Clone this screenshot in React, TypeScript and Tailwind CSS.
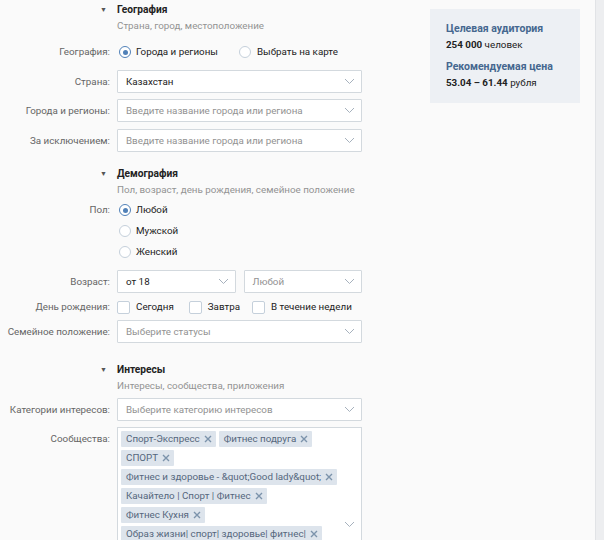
import React from "react";

const font = { fontFamily: "Roboto, 'Open Sans', Arial, sans-serif" };

function Chevron() {
  return (
    <svg width="11" height="7" viewBox="0 0 11 7" className="shrink-0">
      <path d="M1 1l4.5 4.5L10 1" fill="none" stroke="#a6b1bd" strokeWidth="1" />
    </svg>
  );
}

function Radio({ checked, className = "" }: { checked?: boolean; className?: string }) {
  return (
    <span
      className={
        "w-[12px] h-[12px] rounded-full border flex items-center justify-center shrink-0 bg-white " +
        (checked ? "border-[#5181b8] " : "border-[#c5d0db] ") +
        className
      }
    >
      {checked && <span className="w-[5px] h-[5px] rounded-full bg-[#5181b8]" />}
    </span>
  );
}

function Check({ className = "" }: { className?: string }) {
  return <span className={"block w-[13px] h-[13px] rounded-[2px] border border-[#c5d0db] bg-white shrink-0 " + className} />;
}

function Select({ text, placeholder, className = "" }: { text: string; placeholder?: boolean; className?: string }) {
  return (
    <div
      className={
        "h-[23px] border border-[#d3d9de] bg-white rounded-[1px] flex items-center justify-between pl-[8px] pr-[6px] " +
        className
      }
    >
      <span className={placeholder ? "text-[#929292]" : "text-[#222]"}>{text}</span>
      <Chevron />
    </div>
  );
}

function Row({ label, children, className = "" }: { label: string; children: React.ReactNode; className?: string }) {
  return (
    <div className={"flex items-center " + className}>
      <div className="w-[117px] shrink-0 text-right pr-[7px] text-[#656565] whitespace-nowrap">{label}</div>
      <div className="flex-1 min-w-0">{children}</div>
    </div>
  );
}

function Heading({ title, sub, className = "" }: { title: string; sub: string; className?: string }) {
  return (
    <div className={className}>
      <div className="flex items-center h-[14px]">
        <div className="w-[117px] shrink-0 flex justify-end pr-[10px]">
          <span className="text-[7px] text-[#555] leading-none">▼</span>
        </div>
        <span className="font-bold text-[#222] text-[10.2px]">{title}</span>
      </div>
      <div className="flex items-center h-[14px] mt-[2px]">
        <div className="w-[117px] shrink-0" />
        <span className="text-[#939393]">{sub}</span>
      </div>
    </div>
  );
}

function Tag({ text }: { text: string }) {
  return (
    <span className="h-[16px] bg-[#dde4ec] text-[#55677d] pl-[5px] pr-[4px] flex items-center gap-[4px] rounded-[1px] whitespace-nowrap">
      {text}
      <svg width="8" height="8" viewBox="0 0 8 8">
        <path d="M1 1l6 6M7 1L1 7" stroke="#7c93ab" strokeWidth="1.4" />
      </svg>
    </span>
  );
}

const tags = [
  "Спорт-Экспресс",
  "Фитнес подруга",
  "СПОРТ",
  "Фитнес и здоровье - &quot;Good lady&quot;",
  "Качайтело | Спорт | Фитнес",
  "Фитнес Кухня",
  "Образ жизни| спорт| здоровье| фитнес|",
  "Здоровый образ жизни | Спорт | Фитнес",
  "Фитнес дома",
  "Спорт для всех",
  "Тренировки для девушек | Фитнес",
  "Правильное питание | Здоровье | Спорт",
];

export default function App() {
  return (
    <div className="w-[604px] h-[540px] overflow-hidden bg-[#fafafa] flex text-[9.8px] leading-[14px]" style={font}>
      <div className="w-[362px] shrink-0 pt-[3px]">
        <Heading title="География" sub="Страна, город, местоположение" />
        <Row label="География:" className="h-[18px] mt-[10px]">
          <div className="flex items-center">
            <Radio checked className="ml-[2px]" />
            <span className="ml-[5px] text-[#222]">Города и регионы</span>
            <Radio className="ml-[21px]" />
            <span className="ml-[6px] text-[#222]">Выбрать на карте</span>
          </div>
        </Row>
        <Row label="Страна:" className="mt-[9px]">
          <Select text="Казахстан" />
        </Row>
        <Row label="Города и регионы:" className="mt-[6px]">
          <Select text="Введите название города или региона" placeholder />
        </Row>
        <Row label="За исключением:" className="mt-[7px]">
          <Select text="Введите название города или региона" placeholder />
        </Row>

        <Heading title="Демография" sub="Пол, возраст, день рождения, семейное положение" className="mt-[15px]" />
        <Row label="Пол:" className="h-[18px] mt-[4px]">
          <div className="flex items-center">
            <Radio checked className="ml-[2px]" />
            <span className="ml-[5px] text-[#222]">Любой</span>
          </div>
        </Row>
        <Row label="" className="h-[18px] mt-[3px]">
          <div className="flex items-center">
            <Radio className="ml-[2px]" />
            <span className="ml-[5px] text-[#222]">Мужской</span>
          </div>
        </Row>
        <Row label="" className="h-[18px] mt-[3px]">
          <div className="flex items-center">
            <Radio className="ml-[2px]" />
            <span className="ml-[5px] text-[#222]">Женский</span>
          </div>
        </Row>
        <Row label="Возраст:" className="mt-[9px]">
          <div className="flex gap-[8px]">
            <Select text="от 18" className="flex-1" />
            <Select text="Любой" placeholder className="flex-1" />
          </div>
        </Row>
        <Row label="День рождения:" className="h-[18px] mt-[5px]">
          <div className="flex items-center">
            <Check />
            <span className="ml-[6px] text-[#222]">Сегодня</span>
            <Check className="ml-[15px]" />
            <span className="ml-[6px] text-[#222]">Завтра</span>
            <Check className="ml-[12px]" />
            <span className="ml-[6px] text-[#222]">В течение недели</span>
          </div>
        </Row>
        <Row label="Семейное положение:" className="mt-[4px]">
          <Select text="Выберите статусы" placeholder />
        </Row>

        <Heading title="Интересы" sub="Интересы, сообщества, приложения" className="mt-[20px]" />
        <Row label="Категории интересов:" className="mt-[5px]">
          <Select text="Выберите категорию интересов" placeholder />
        </Row>
        <div className="flex items-start mt-[6px]">
          <div className="w-[117px] shrink-0 text-right pr-[7px] text-[#656565] pt-[5px] whitespace-nowrap">Сообщества:</div>
          <div className="flex-1 min-w-0 border border-[#d3d9de] bg-white flex items-center pr-[6px]">
            <div className="flex-1 flex flex-wrap gap-x-[3px] gap-y-[3px] pl-[3px] pt-[3px] pb-[3px]">
              {tags.map((t) => (
                <Tag key={t} text={t} />
              ))}
            </div>
            <Chevron />
          </div>
        </div>
      </div>

      <div className="flex-1 pl-[68px] pt-[9px]">
        <div className="w-[150px] h-[94px] bg-[#edf0f4] pl-[16px] pt-[13px]">
          <div className="font-bold text-[#45678f] text-[10.5px] leading-[14px]">Целевая аудитория</div>
          <div className="mt-[2px] text-[#222]">
            <span className="font-bold">254 000</span> человек
          </div>
          <div className="font-bold text-[#45678f] text-[10.5px] leading-[14px] mt-[8px]">Рекомендуемая цена</div>
          <div className="mt-[2px] text-[#222]">
            <span className="font-bold">53.04 – 61.44</span> рубля
          </div>
        </div>
      </div>
      <div className="w-[9px] shrink-0 bg-[#edeef0] border-l border-[#e1e3e6]" />
    </div>
  );
}
